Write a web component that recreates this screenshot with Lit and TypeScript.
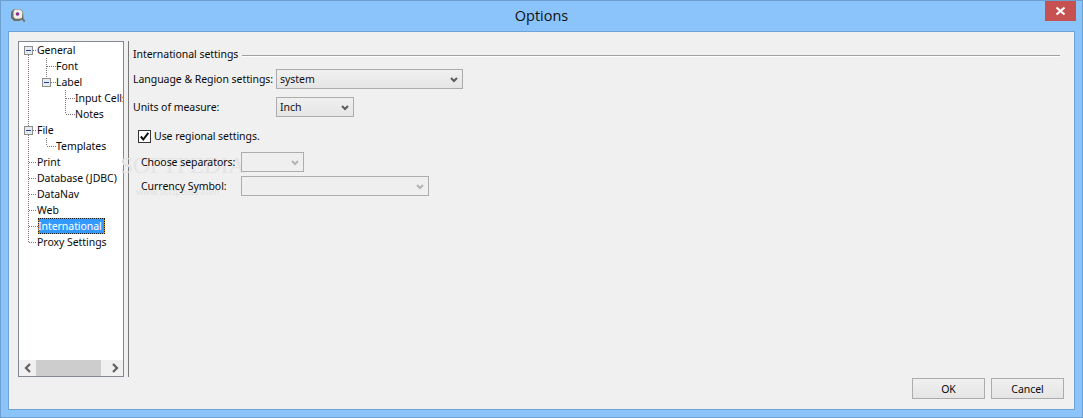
import { LitElement, html, css, svg } from "lit";
import { customElement } from "lit/decorators.js";

const rows: { t: string; x: number; sel?: boolean }[] = [
  { t: "General", x: 18 },
  { t: "Font", x: 37 },
  { t: "Label", x: 37 },
  { t: "Input Cells", x: 56 },
  { t: "Notes", x: 56 },
  { t: "File", x: 18 },
  { t: "Templates", x: 37 },
  { t: "Print", x: 18 },
  { t: "Database (JDBC)", x: 18 },
  { t: "DataNav", x: 18 },
  { t: "Web", x: 18 },
  { t: "International", x: 18, sel: true },
  { t: "Proxy Settings", x: 18 },
];

const chev = svg`<svg class="chev" width="10" height="7" viewBox="0 0 10 7"><path d="M2 2 5 5l3-3" fill="none" stroke="currentColor" stroke-width="2"/></svg>`;

const box = (x: number, y: number) => svg`
  <rect x="${x + 0.5}" y="${y + 0.5}" width="8" height="8" fill="#e6ebf3" stroke="#8d8d8d"/>
  <path d="M${x + 2} ${y + 4.500}h5" stroke="#27408b" fill="none"/>`;

@customElement("app-root")
export class AppRoot extends LitElement {
  static styles = css`
    :host { display: block; width: 1083px; height: 418px; overflow: hidden; }
    * { box-sizing: border-box; }
    .win {
      width: 1083px; height: 418px; background: #8ac4fb; border: 1px solid #6d9fd0;
      display: flex; flex-direction: column; font-family: "Noto Sans", sans-serif; font-size: 10.500px; letter-spacing: -0.05px; color: #0a0a0a;
    }
    .titlebar { height: 30px; flex: none; display: flex; align-items: flex-start; position: relative; }
    .appicon { position: absolute; left: 8px; top: 6px; }
    .title { flex: 1; text-align: center; font-family: "Open Sans", sans-serif; font-size: 14.500px; letter-spacing: 0; line-height: 29px; color: #111; }
    .close {
      position: absolute; right: 6px; top: 0; width: 31px; height: 20px; background: #c75050;
      display: flex; align-items: center; justify-content: center;
    }
    .client {
      flex: 1; margin: 0 7px 7px; background: #f0f0f0; border: 1px solid #6fa3d6;
      position: relative; display: flex; flex-direction: column;
      padding: 9px 10px 10px 9px;
    }
    .main { display: flex; height: 336px; flex: none; }
    .treebox {
      width: 106px; height: 336px; flex: none; border: 1px solid #828790; background: #fff;
      display: flex; flex-direction: column; position: relative;
    }
    .tree { flex: 1; position: relative; overflow: hidden; }
    .lines { position: absolute; left: 0; top: 0; }
    .row { height: 16px; line-height: 16px; white-space: nowrap; position: relative; }
    .row span { display: inline-block; height: 16px; }
    .row .sel {
      margin-left: 1px; line-height: 14px; padding: 0 2px 0 0; text-indent: -1px; color: #fff;
      border: 1px dotted #1a1a1a;
      background: linear-gradient(#3399ff, #3399ff) padding-box, #e8920c border-box;
    }
    .sb { height: 16px; flex: none; background: #f0f0f0; display: flex; align-items: center; }
    .thumb { width: 65px; height: 16px; background: #cdcdcd; flex: none; }
    .gap { flex: 1; }
    .arrow { width: 17px; height: 16px; display: flex; align-items: center; justify-content: center; color: #606060; flex: none; }
    .divider { width: 1px; height: 336px; background: #7a7a7a; margin-left: 4px; flex: none; }
    .panel { flex: 1; padding: 5px 4px 0 4px; display: flex; flex-direction: column; min-width: 0; position: relative; }
    .legend { display: flex; align-items: center; gap: 4px; height: 16px; position: relative; }
    .legend i { flex: 1; height: 2px; background: linear-gradient(#a0a0a0 0 1px, #fff 1px 2px); margin-top: 4px; }
    .fr { display: flex; align-items: center; height: 20px; position: relative; }
    .fr.a { margin-top: 7px; }
    .fr.b { margin-top: 8px; }
    .lab { width: 143px; flex: none; white-space: nowrap; }
    .combo {
      height: 20px; border: 1px solid #acacac; background: linear-gradient(#f0f0f0, #e5e5e5);
      display: flex; align-items: center; justify-content: space-between; padding: 0 3px; color: #111; flex: none;
    }
    .chev { color: #5a5a5a; display: block; }
    .c1 { width: 187px; }
    .c2 { width: 78px; }
    .check { display: flex; align-items: center; gap: 3px; margin: 10px 0 0 5px; height: 18px; position: relative; }
    .cb { width: 13px; height: 13px; border: 1px solid #333; background: #fff; display: flex; align-items: center; justify-content: center; flex: none; }
    .dis { margin-left: 8px; position: relative; }
    .dis .lab { width: 100px; }
    .dis .combo { background: #efefef; border-color: #adadad; }
    .dis .chev { color: #b4b4b4; }
    .dis .c3 { width: 63px; }
    .dis .c4 { width: 188px; }
    .dis .one { margin-top: 7px; }
    .dis .two { margin-top: 4px; }
    .wm { position: absolute; left: -9px; top: 112px; font-family: "Liberation Serif", serif; font-size: 24px; line-height: 24px; letter-spacing: -0.5px; color: #e4e4e4; white-space: nowrap; }
    .wm sup { position: absolute; left: 126px; top: -2px; font-size: 7px; line-height: 8px; letter-spacing: 0; }
    .www { position: absolute; left: 16px; top: 34px; font-family: "Noto Sans", sans-serif; font-size: 9px; line-height: 10px; letter-spacing: 0; color: #e0e0e0; white-space: nowrap; }
    .foot { display: flex; justify-content: flex-end; gap: 6px; margin-top: 1px; }
    .btn {
      width: 73px; height: 21px; border: 1px solid #acacac; background: linear-gradient(#f0f0f0, #e5e5e5);
      display: flex; align-items: center; justify-content: center;
    }
  `;

  render() {
    return html`
      <div class="win">
        <div class="titlebar">
          <svg class="appicon" width="18" height="18" viewBox="0 0 18 18">
            <path d="M5 2h6l3 2.500.5 7 2 2.500-1.500 1-2.500-2.500-2 1.500H5L2 11V5z" fill="#6e6e64"/>
            <path d="M5.500 2.500h5.500l2.500 2.300-.5 6-2.500 1H6.500L4.500 10V5z" fill="#eeeeea"/>
            <circle cx="8.500" cy="7" r="1.800" fill="#8a2a8a"/>
          </svg>
          <div class="title">Options</div>
          <div class="close">
            <svg width="11" height="10" viewBox="0 0 11 10"><path d="M1.500 1.500l8 7M9.500 1.500l-8 7" stroke="#fff" stroke-width="2.200" fill="none"/></svg>
          </div>
        </div>
        <div class="client">
          <div class="main">
            <div class="treebox">
              <div class="tree">
                <svg class="lines" width="104" height="260" viewBox="0 0 104 260">
                  <path d="M9.500 13V200M27.500 16V40M46.500 48V72M27.500 96V104" stroke="#777" stroke-dasharray="1 1" fill="none"/>
                  <path d="M14 8.500h4M28 24.500h9M32 40.500h5M47 56.500h9M47 72.500h9M14 88.500h4M28 104.500h9M10 120.500h8M10 136.500h8M10 152.500h8M10 168.500h8M10 184.500h9M10 200.500h8" stroke="#777" stroke-dasharray="1 1" fill="none"/>
                  ${box(5, 4)} ${box(23, 36)} ${box(5, 84)}
                </svg>
                ${rows.map(
                  (r) => html`<div class="row" style="padding-left:${r.x}px"><span class="${r.sel ? "sel" : ""}">${r.t}</span></div>`
                )}
              </div>
              <div class="sb">
                <div class="arrow"><svg width="8" height="10" viewBox="0 0 8 10"><path d="M6 1 2 5l4 4" fill="none" stroke="currentColor" stroke-width="2.200"/></svg></div>
                <div class="thumb"></div>
                <div class="gap"></div>
                <div class="arrow"><svg width="8" height="10" viewBox="0 0 8 10"><path d="M2 1l4 4-4 4" fill="none" stroke="currentColor" stroke-width="2.200"/></svg></div>
              </div>
            </div>
            <div class="divider"></div>
            <div class="panel">
              <div class="wm">SOFTPEDIA<sup>TM</sup><div class="www">www.softpedia.com</div></div>
              <div class="legend"><span>International settings</span><i></i></div>
              <div class="fr a"><div class="lab">Language &amp; Region settings:</div><div class="combo c1"><span>system</span>${chev}</div></div>
              <div class="fr b"><div class="lab">Units of measure:</div><div class="combo c2"><span>Inch</span>${chev}</div></div>
              <div class="check">
                <div class="cb"><svg width="11" height="11" viewBox="0 0 11 11"><path d="M1.800 5.500 4.300 8.500 9.300 1.800" fill="none" stroke="#111" stroke-width="2"/></svg></div>
                <span>Use regional settings.</span>
              </div>
              <div class="dis">
                <div class="fr one"><div class="lab">Choose separators:</div><div class="combo c3"><span></span>${chev}</div></div>
                <div class="fr two"><div class="lab">Currency Symbol:</div><div class="combo c4"><span></span>${chev}</div></div>
              </div>
            </div>
          </div>
          <div class="foot">
            <div class="btn">OK</div>
            <div class="btn">Cancel</div>
          </div>
        </div>
      </div>
    `;
  }
}
